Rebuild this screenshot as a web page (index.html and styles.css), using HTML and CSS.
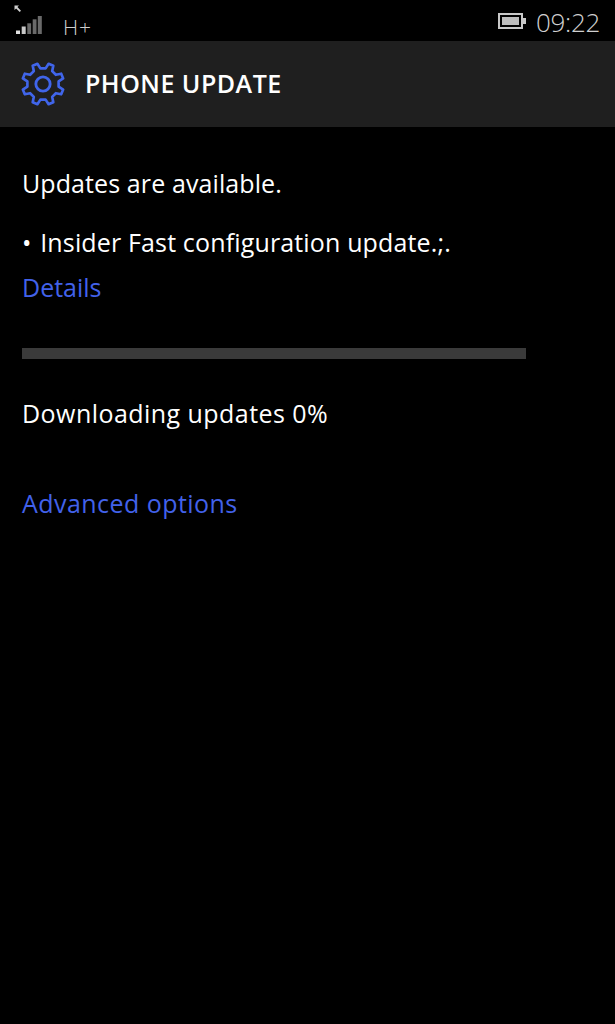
FILE: index.html
```html
<!DOCTYPE html>
<html lang="en">
<head>
<meta charset="utf-8">
<title>Phone update</title>
<link rel="stylesheet" href="styles.css">
</head>
<body>
<div class="status">
  <div class="status-left">
    <svg class="roam" viewBox="0 0 8 8" width="8" height="8"><path d="M0.5 0.5H5L3.4 2.1L7 5.7L5.7 7L2.1 3.4L0.5 5Z" fill="#d0d0d0"/></svg>
    <svg class="signal" viewBox="0 0 26 18" width="26" height="18">
      <rect x="0" y="14.5" width="4" height="3.5" fill="#e0e0e0"/>
      <rect x="5.7" y="10.5" width="4" height="7.5" fill="#c8c8c8"/>
      <rect x="11.3" y="7.3" width="3.8" height="10.7" fill="#6a6a6a"/>
      <rect x="16.7" y="3.3" width="3.8" height="14.7" fill="#6a6a6a"/>
      <rect x="21.8" y="0" width="4" height="18" fill="#6a6a6a"/>
    </svg>
    <span class="net">H+</span>
  </div>
  <div class="status-right">
    <svg class="battery" viewBox="0 0 28 16" width="28" height="16">
      <rect x="1" y="1" width="23" height="14" fill="none" stroke="#c8c8c8" stroke-width="2"/>
      <rect x="4" y="4" width="17" height="8" fill="#bdbdbd"/>
      <rect x="25" y="5" width="3" height="6" fill="#c8c8c8"/>
    </svg>
    <span class="clock">09:22</span>
  </div>
</div>
<header class="title-bar">
  <svg class="gear" viewBox="-23.5 -23.5 47 47" width="48" height="48">
    <polygon points="15.29,2.56 19.75,5.48 17.84,10.09 12.62,9 9,12.62 10.09,17.84 5.48,19.75 2.56,15.29 -2.56,15.29 -5.48,19.75 -10.09,17.84 -9,12.62 -12.62,9 -17.84,10.09 -19.75,5.48 -15.29,2.56 -15.29,-2.56 -19.75,-5.48 -17.84,-10.09 -12.62,-9 -9,-12.62 -10.09,-17.84 -5.48,-19.75 -2.56,-15.29 2.56,-15.29 5.48,-19.75 10.09,-17.84 9,-12.62 12.62,-9 17.84,-10.09 19.75,-5.48 15.29,-2.56" fill="none" stroke="#4065ea" stroke-width="2.6" stroke-linejoin="round"/>
    <circle r="7" fill="none" stroke="#4065ea" stroke-width="2.8"/>
  </svg>
  <h1 class="title">PHONE UPDATE</h1>
</header>
<main class="content">
  <p class="line first">Updates are available.</p>
  <p class="line item"><span class="bullet">•</span> Insider Fast configuration update.;.</p>
  <a class="link details" href="#">Details</a>
  <div class="progress"></div>
  <p class="line download">Downloading updates 0%</p>
  <a class="link advanced" href="#">Advanced options</a>
</main>
</body>
</html>
```
FILE: styles.css
```css
* { box-sizing: border-box; }
html, body { margin: 0; padding: 0; }
body {
  width: 615px;
  height: 1024px;
  background: #000;
  color: #fff;
  font-family: "Open Sans", "Noto Sans", sans-serif;
  overflow: hidden;
}
.status {
  position: relative;
  height: 41px;
  display: flex;
  justify-content: space-between;
  padding: 0 15px 0 16px;
}
.status-left { display: flex; align-items: flex-start; padding-top: 16px; }
.roam { position: absolute; left: 14px; top: 5px; }
.signal { display: block; }
.net { margin-left: 21px; margin-top: -1px; font-size: 21px; font-weight: 300; line-height: 24px; letter-spacing: 1px; color: #cfcfcf; }
.status-right { display: flex; align-items: flex-start; padding-top: 5px; }
.battery { display: block; margin: 8px 10px 0 0; }
.clock { font-size: 26px; line-height: 35px; font-weight: 300; color: #d0d0d0; letter-spacing: -0.3px; }
.title-bar {
  height: 86px;
  background: #1f1f1f;
  display: flex;
  align-items: center;
  padding-left: 19px;
}
.gear { display: block; }
.title { margin: 0 0 2px 18px; font-size: 25px; font-weight: 600; letter-spacing: 0.5px; color: #fff; }
.content { padding: 39px 22px 0; font-weight: 400; }
.line { margin: 0; font-size: 25px; line-height: 34px; }
.first { letter-spacing: 0.1px; }
.item { margin-top: 25px; letter-spacing: 0.15px; }
.bullet { margin-right: 2px; }
.link { display: block; font-size: 25px; line-height: 34px; color: #4262ea; text-decoration: none; }
.details { margin-top: 11px; }
.progress { width: 504px; height: 11px; margin-top: 44px; background: #3a3a3a; }
.download { margin-top: 37px; letter-spacing: 0.45px; }
.advanced { margin-top: 56px; letter-spacing: 0.45px; }
```
